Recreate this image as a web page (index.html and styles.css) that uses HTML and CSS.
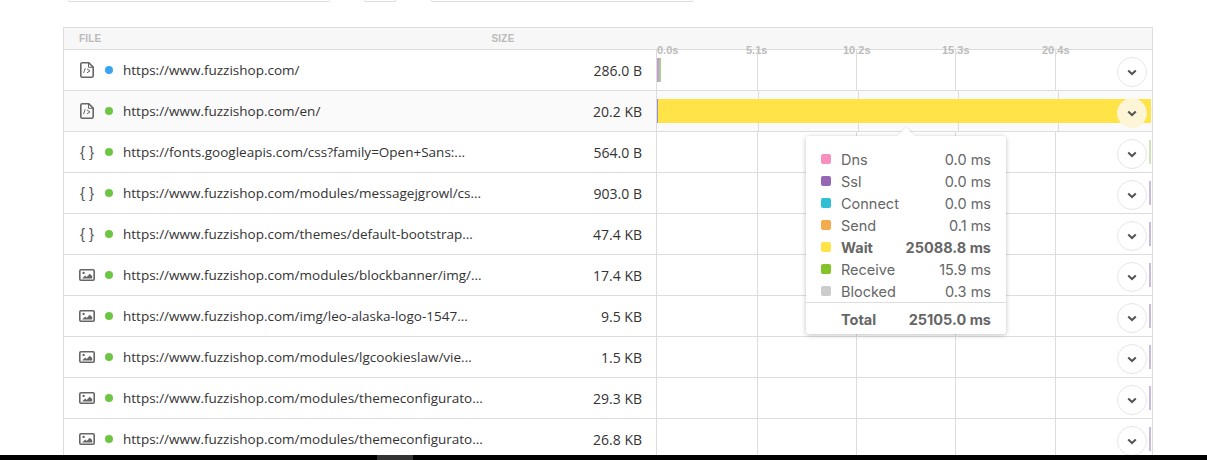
FILE: index.html
```html
<!DOCTYPE html>
<html lang="en">
<head>
<meta charset="utf-8">
<title>Waterfall</title>
<link rel="stylesheet" href="styles.css">
</head>
<body>
<svg class="defs" width="0" height="0" aria-hidden="true">
  <symbol id="doc" viewBox="0 0 14 16">
    <path d="M2 .8h6.800L13.200 5.200v8.600a1.400 1.400 0 0 1-1.400 1.400H2A1.400 1.400 0 0 1 .8 13.800V2.200A1.400 1.400 0 0 1 2 .8z" fill="none" stroke="#666" stroke-width="1.600"/>
    <path d="M8.500 1v4.300H13" fill="none" stroke="#666" stroke-width="1"/>
    <path d="M5.200 6.200 3.600 11M7 7l3 1.900L7 10.800" fill="none" stroke="#666" stroke-width="1"/>
  </symbol>
  <symbol id="pic" viewBox="0 0 16 12">
    <rect x=".8" y=".8" width="14.400" height="10.400" rx="1.200" fill="none" stroke="#666" stroke-width="1.600"/>
    <circle cx="4.600" cy="3.900" r="1.200" fill="#666"/>
    <path d="M3 9.500 6.200 6.500l1.500 1.400 3-3.200L13.200 7v2.500z" fill="#666"/>
  </symbol>
  <symbol id="chev" viewBox="0 0 10 7">
    <path d="M1.200 1.400 5 5l3.800-3.600" fill="none" stroke="#555" stroke-width="2"/>
  </symbol>
</svg>

<div class="filters">
  <div class="filter filter-a"></div>
  <div class="filter filter-b"></div>
  <div class="filter filter-c"></div>
</div>

<div class="table">
  <div class="head">
    <div class="head-file"><span>File</span><span class="head-size">Size</span></div>
    <div class="head-time">
      <div class="ticks">
        <span class="t0">0.0s</span><span class="t1">5.1s</span><span class="t2">10.2s</span><span class="t3">15.3s</span><span class="t4">20.4s</span>
      </div>
    </div>
  </div>

  <div class="row">
    <div class="file">
      <svg class="ico ico-doc"><use href="#doc"/></svg><i class="dot blue"></i>
      <span class="url">https://www.fuzzishop.com/</span><span class="size">286.0 B</span>
    </div>
    <div class="time"><div class="bar bar-first"></div><button class="more"><svg class="chev"><use href="#chev"/></svg></button></div>
  </div>

  <div class="row active">
    <div class="file">
      <svg class="ico ico-doc"><use href="#doc"/></svg><i class="dot"></i>
      <span class="url">https://www.fuzzishop.com/en/</span><span class="size">20.2 KB</span>
    </div>
    <div class="time"><div class="bar bar-wait"></div><button class="more"><svg class="chev"><use href="#chev"/></svg></button></div>
  </div>

  <div class="row">
    <div class="file">
      <span class="ico brace">{ }</span><i class="dot"></i>
      <span class="url">https://fonts.googleapis.com/css?family=Open+Sans:...</span><span class="size">564.0 B</span>
    </div>
    <div class="time"><div class="bar bar-end green"></div><button class="more"><svg class="chev"><use href="#chev"/></svg></button></div>
  </div>

  <div class="row">
    <div class="file">
      <span class="ico brace">{ }</span><i class="dot"></i>
      <span class="url">https://www.fuzzishop.com/modules/messagejgrowl/cs...</span><span class="size">903.0 B</span>
    </div>
    <div class="time"><div class="bar bar-end"></div><button class="more"><svg class="chev"><use href="#chev"/></svg></button></div>
  </div>

  <div class="row">
    <div class="file">
      <span class="ico brace">{ }</span><i class="dot"></i>
      <span class="url">https://www.fuzzishop.com/themes/default-bootstrap...</span><span class="size">47.4 KB</span>
    </div>
    <div class="time"><div class="bar bar-end"></div><button class="more"><svg class="chev"><use href="#chev"/></svg></button></div>
  </div>

  <div class="row">
    <div class="file">
      <svg class="ico ico-pic"><use href="#pic"/></svg><i class="dot"></i>
      <span class="url">https://www.fuzzishop.com/modules/blockbanner/img/...</span><span class="size">17.4 KB</span>
    </div>
    <div class="time"><div class="bar bar-end"></div><button class="more"><svg class="chev"><use href="#chev"/></svg></button></div>
  </div>

  <div class="row">
    <div class="file">
      <svg class="ico ico-pic"><use href="#pic"/></svg><i class="dot"></i>
      <span class="url">https://www.fuzzishop.com/img/leo-alaska-logo-1547...</span><span class="size">9.5 KB</span>
    </div>
    <div class="time"><div class="bar bar-end"></div><button class="more"><svg class="chev"><use href="#chev"/></svg></button></div>
  </div>

  <div class="row">
    <div class="file">
      <svg class="ico ico-pic"><use href="#pic"/></svg><i class="dot"></i>
      <span class="url">https://www.fuzzishop.com/modules/lgcookieslaw/vie...</span><span class="size">1.5 KB</span>
    </div>
    <div class="time"><div class="bar bar-end"></div><button class="more"><svg class="chev"><use href="#chev"/></svg></button></div>
  </div>

  <div class="row">
    <div class="file">
      <svg class="ico ico-pic"><use href="#pic"/></svg><i class="dot"></i>
      <span class="url">https://www.fuzzishop.com/modules/themeconfigurato...</span><span class="size">29.3 KB</span>
    </div>
    <div class="time"><div class="bar bar-end"></div><button class="more"><svg class="chev"><use href="#chev"/></svg></button></div>
  </div>

  <div class="row">
    <div class="file">
      <svg class="ico ico-pic"><use href="#pic"/></svg><i class="dot"></i>
      <span class="url">https://www.fuzzishop.com/modules/themeconfigurato...</span><span class="size">26.8 KB</span>
    </div>
    <div class="time"><div class="bar bar-end"></div><button class="more"><svg class="chev"><use href="#chev"/></svg></button></div>
  </div>
</div>

<div class="tooltip">
  <ul class="tips">
    <li><i class="sw dns"></i><span class="k">Dns</span><span class="v">0.0 ms</span></li>
    <li><i class="sw ssl"></i><span class="k">Ssl</span><span class="v">0.0 ms</span></li>
    <li><i class="sw con"></i><span class="k">Connect</span><span class="v">0.0 ms</span></li>
    <li><i class="sw snd"></i><span class="k">Send</span><span class="v">0.1 ms</span></li>
    <li class="strong"><i class="sw wai"></i><span class="k">Wait</span><span class="v">25088.8 ms</span></li>
    <li><i class="sw rec"></i><span class="k">Receive</span><span class="v">15.9 ms</span></li>
    <li><i class="sw blo"></i><span class="k">Blocked</span><span class="v">0.3 ms</span></li>
  </ul>
  <div class="total strong"><span class="k">Total</span><span class="v">25105.0 ms</span></div>
</div>

<div class="taskbar"><div class="task"></div></div>
</body>
</html>
```

FILE: styles.css
```css
html, body {
  margin: 0;
  padding: 0;
  height: 460px;
  overflow: hidden;
  background: #fff;
}
body {
  position: relative;
  font-family: "Liberation Sans", Arial, sans-serif;
  color: #333;
}
.defs { position: absolute; }

.filters {
  display: flex;
  height: 27px;
  padding-left: 68px;
  box-sizing: border-box;
}
.filter {
  height: 1px;
  border: 1px solid #ddd;
  border-top: 0;
  border-radius: 0 0 3px 3px;
}
.filter-a { width: 260px; }
.filter-b { width: 30px; margin-left: 34px; }
.filter-c { width: 260px; margin-left: 35px; }

.table {
  margin-left: 63px;
  width: 1090px;
  box-sizing: border-box;
  border: 1px solid #ddd;
  border-bottom: 0;
}
.head {
  display: grid;
  grid-template-columns: 593px 1fr;
  height: 22px;
  background: #f7f7f7;
  box-shadow: inset 0 -1px 0 #ddd;
  font-size: 10px;
  font-weight: 700;
  letter-spacing: .2px;
  color: #bbb;
  text-transform: uppercase;
}
.head-file {
  display: flex;
  padding: 5px 0 0 15px;
}
.head-size { margin-left: 390px; }
.head-time { position: relative; }
.ticks {
  position: absolute;
  left: 0;
  top: 16px;
  display: flex;
  font-size: 11px;
  letter-spacing: 0;
  text-transform: none;
  white-space: nowrap;
}
.t0 { width: 89px; }
.t1 { width: 97px; }
.t2 { width: 99px; }
.t3 { width: 100px; }

.row {
  display: grid;
  grid-template-columns: 593px 1fr;
  height: 41px;
  box-sizing: border-box;
  border-bottom: 1px solid #ddd;
}
.row.active { background: #fafafa; }

.file {
  display: flex;
  align-items: center;
  padding: 0 14px 0 15px;
  border-right: 1px solid #ddd;
  font-family: "Open Sans", "Liberation Sans", sans-serif;
  font-size: 13.500px;
}
.ico { flex: none; width: 16px; }
.ico-doc { height: 16px; }
.ico-pic { height: 12px; }
.brace {
  font-family: "Liberation Sans", sans-serif;
  font-size: 15px;
  line-height: 16px;
  text-align: center;
  color: #555;
  white-space: nowrap;
}
.dot {
  flex: none;
  width: 8px;
  height: 8px;
  margin: 0 10px;
  border-radius: 50%;
  background: #6cc644;
}
.dot.blue { background: #39a3f4; }
.url { color: #333; flex: 1; white-space: nowrap; overflow: hidden; }
.size { color: #333; font-size: 14px; }

.time {
  position: relative;
  background-image:
    linear-gradient(#ddd, #ddd), linear-gradient(#ddd, #ddd),
    linear-gradient(#ddd, #ddd), linear-gradient(#ddd, #ddd);
  background-repeat: no-repeat;
  background-size: 1px 100%;
  background-position: 100px 0, 199px 0, 298px 0, 398px 0;
}
.active .time {
  background-position: 101px 0, 201px 0, 301px 0, 401px 0;
}
.bar {
  position: absolute;
  top: 8px;
  height: 24px;
}
.bar-first {
  left: 0;
  width: 4px;
  background: linear-gradient(to right, #c79ad2 0 2px, #a8d08c 2px 4px);
}
.bar-wait {
  left: 0;
  width: 494px;
  background: linear-gradient(to right, #9a8fd0 0 1px, #ffe347 1px);
}
.bar-end {
  left: 492px;
  width: 2px;
  background: #c6b9e6;
}
.bar-end.green { background: #cfe3b4; }

.more {
  position: absolute;
  left: 460px;
  top: 7px;
  display: flex;
  align-items: center;
  justify-content: center;
  width: 30px;
  height: 30px;
  padding: 0;
  background: #fff;
  border: 1px solid #e6e6e6;
  border-radius: 50%;
}
.active .more {
  background: #fdf5d6;
  border-color: #fdf5d6;
}
.chev { width: 10px; height: 7px; }

.tooltip {
  position: absolute;
  left: 806px;
  top: 136px;
  width: 200px;
  height: 198px;
  box-sizing: border-box;
  padding: 12px 15px 0;
  background: #fff;
  border-radius: 3px;
  box-shadow: 0 1px 5px rgba(0, 0, 0, .25);
  font-family: Inter, "Liberation Sans", sans-serif;
  font-size: 14.500px;
  color: #666;
}
.tooltip::before {
  content: "";
  position: absolute;
  left: 94px;
  top: -6px;
  width: 12px;
  height: 12px;
  background: #fff;
  transform: rotate(45deg);
  box-shadow: -1px -1px 2px rgba(0, 0, 0, .06);
}
.tips {
  position: relative;
  list-style: none;
  margin: 0;
  padding: 0;
}
.tips li {
  display: flex;
  align-items: center;
  height: 22px;
}
.sw {
  flex: none;
  width: 10px;
  height: 10px;
  margin-right: 10px;
  border-radius: 2px;
}
.k { flex: 1; }
.strong { font-weight: 700; }
.dns { background: #f78fbf; }
.ssl { background: #9466b5; }
.con { background: #2fc0d4; }
.snd { background: #f4ab4e; }
.wai { background: #ffe347; }
.rec { background: #84c32a; }
.blo { background: #ccc; }
.total {
  display: flex;
  align-items: center;
  height: 33px;
  margin: 0 -15px;
  padding: 0 15px 0 35px;
  border-top: 1px solid #ddd;
}

.taskbar {
  position: absolute;
  left: 0;
  right: 0;
  bottom: 0;
  height: 5px;
  background: #000;
}
.task {
  width: 36px;
  height: 5px;
  margin-left: 377px;
  background: #333;
}
```
